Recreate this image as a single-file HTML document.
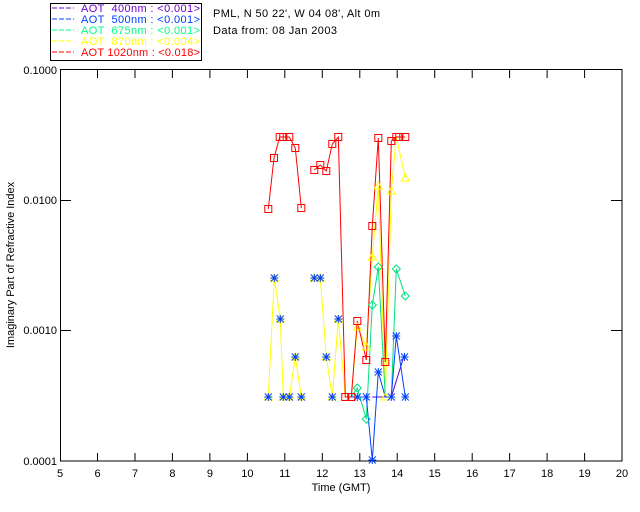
<!DOCTYPE html>
<html><head><style>html,body{margin:0;padding:0;background:#fff}svg{display:block}text{font-family:"Liberation Sans",sans-serif;font-size:11px}</style></head><body>
<svg width="640" height="512" viewBox="0 0 640 512" xmlns="http://www.w3.org/2000/svg">
<defs>
<path id="tri" d="M0 -4L4 3H-4Z" fill="none" stroke="#ffff00"/>
<path id="dia" d="M0 -4L4 0L0 4L-4 0Z" fill="none" stroke="#00e080"/>
<path id="ast" d="M-3.5 -3.5L3.5 3.5M3.5 -3.5L-3.5 3.5M0 -4V4M-4 0H4" stroke="#0040ff" fill="none"/>
</defs>
<rect x="50.5" y="3.5" width="151" height="57" fill="none" stroke="#000"/>
<g font-size="11">
<line x1="52" y1="8" x2="74" y2="8" stroke="#7000d0" stroke-dasharray="5,2"/><text x="81" y="12" fill="#7000d0" textLength="119" xml:space="preserve">AOT  400nm : &lt;0.001&gt;</text>
<line x1="52" y1="19" x2="74" y2="19" stroke="#0040ff" stroke-dasharray="5,2"/><text x="81" y="23" fill="#0040ff" textLength="119" xml:space="preserve">AOT  500nm : &lt;0.001&gt;</text>
<line x1="52" y1="30" x2="74" y2="30" stroke="#00ff80" stroke-dasharray="5,2"/><text x="81" y="34" fill="#00ff80" textLength="119" xml:space="preserve">AOT  675nm : &lt;0.001&gt;</text>
<line x1="52" y1="41" x2="74" y2="41" stroke="#ffff00" stroke-dasharray="5,2"/><text x="81" y="45" fill="#ffff00" textLength="119" xml:space="preserve">AOT  870nm : &lt;0.004&gt;</text>
<line x1="52" y1="52" x2="74" y2="52" stroke="#ff0000" stroke-dasharray="5,2"/><text x="81" y="56" fill="#ff0000" textLength="119" xml:space="preserve">AOT 1020nm : &lt;0.018&gt;</text>
</g>
<text x="213" y="17" textLength="167">PML, N 50 22', W 04 08', Alt 0m</text>
<text x="213" y="34" textLength="124">Data from: 08 Jan 2003</text>
<rect x="60.5" y="69.5" width="561.5" height="391.5" fill="none" stroke="#000"/>
<g stroke="#000">
<path d="M97.5 461v-8M135 461v-8M172.4 461v-8M209.9 461v-8M247.4 461v-8M284.8 461v-8M322.3 461v-8M359.8 461v-8M397.2 461v-8M434.7 461v-8M472.2 461v-8M509.6 461v-8M547.1 461v-8M584.6 461v-8"/>
<path d="M97.5 70v8M135 70v8M172.4 70v8M209.9 70v8M247.4 70v8M284.8 70v8M322.3 70v8M359.8 70v8M397.2 70v8M434.7 70v8M472.2 70v8M509.6 70v8M547.1 70v8M584.6 70v8"/>
<path d="M60 200.5h11M60 330.5h11M622 200.5h-11M622 330.5h-11"/>
</g>
<g text-anchor="end"><text x="57" y="74">0.1000</text><text x="57" y="204">0.0100</text><text x="57" y="334">0.0010</text><text x="57" y="465">0.0001</text></g>
<g text-anchor="middle">
<text x="60" y="477">5</text><text x="97.5" y="477">6</text><text x="135" y="477">7</text><text x="172.4" y="477">8</text><text x="209.9" y="477">9</text><text x="247.4" y="477">10</text><text x="284.8" y="477">11</text><text x="322.3" y="477">12</text><text x="359.8" y="477">13</text><text x="397.2" y="477">14</text><text x="434.7" y="477">15</text><text x="472.2" y="477">16</text><text x="509.6" y="477">17</text><text x="547.1" y="477">18</text><text x="584.6" y="477">19</text><text x="622" y="477">20</text>
<text x="341" y="491">Time (GMT)</text>
<text transform="translate(14,265) rotate(-90)">Imaginary Part of Refractive Index</text>
</g>
<g fill="none" stroke-width="1">
<polyline stroke="#ffff00" points="268.3,397 274.3,278 280.3,319 283.3,397 289.3,397 295.3,357 301.3,397"/>
<polyline stroke="#ffff00" points="314.3,278 320.3,278 326.3,357 332.3,397 338.3,319 345.3,397 351.3,397 357.3,327 366.3,347 372.3,257 378.3,186 385.3,397 391.3,191 396.3,137 405.3,178"/>
<polyline stroke="#00e080" points="345.3,397 351.3,397 357.3,388 366.3,419 372.3,305 378.3,267 385.3,397 391.3,397 396.3,269 405.3,296"/>
<polyline stroke="#6000c0" points="372.3,397 378.3,397 385.3,397 391.3,397 403.7,357"/>
<polyline stroke="#0040ff" points="345.3,397 357.3,397 366.3,397 372.3,460 378.3,372 385.3,397 391.3,397 396.3,336 405.3,397"/>
<polyline stroke="#ff0000" points="268.3,209 274,158 279.7,137 283.3,137 289.3,137 295.3,148 301.3,208"/>
<polyline stroke="#ff0000" points="314.3,170 320.3,165 326.3,171 332.3,144 338.3,137 345.3,397 351.3,397 357.3,321 366.3,360 372.3,226 378.3,138 385.3,362 391.3,141 396.3,137 399.3,137 405.3,137"/>
</g>
<g>
<use href="#tri" x="268.3" y="397"/><use href="#tri" x="274.3" y="278"/><use href="#tri" x="280.3" y="319"/><use href="#tri" x="283.3" y="397"/><use href="#tri" x="289.3" y="397"/><use href="#tri" x="295.3" y="357"/><use href="#tri" x="301.3" y="397"/><use href="#tri" x="314.3" y="278"/><use href="#tri" x="320.3" y="278"/><use href="#tri" x="326.3" y="357"/><use href="#tri" x="332.3" y="397"/><use href="#tri" x="338.3" y="319"/><use href="#tri" x="357.3" y="327"/><use href="#tri" x="366.3" y="347"/><use href="#tri" x="372.3" y="257"/><use href="#tri" x="378.3" y="186"/><use href="#tri" x="385.3" y="397"/><use href="#tri" x="391.3" y="191"/><use href="#tri" x="405.3" y="178"/>
<use href="#dia" x="357.3" y="388"/><use href="#dia" x="366.3" y="419"/><use href="#dia" x="372.3" y="305"/><use href="#dia" x="378.3" y="267"/><use href="#dia" x="396.3" y="269"/><use href="#dia" x="405.3" y="296"/>
<use href="#ast" x="268.3" y="397"/><use href="#ast" x="274.3" y="278"/><use href="#ast" x="280.3" y="319"/><use href="#ast" x="283.3" y="397"/><use href="#ast" x="289.3" y="397"/><use href="#ast" x="295.3" y="357"/><use href="#ast" x="301.3" y="397"/><use href="#ast" x="314.3" y="278"/><use href="#ast" x="320.3" y="278"/><use href="#ast" x="326.3" y="357"/><use href="#ast" x="332.3" y="397"/><use href="#ast" x="338.3" y="319"/><use href="#ast" x="357.3" y="397"/><use href="#ast" x="366.3" y="397"/><use href="#ast" x="372.3" y="460"/><use href="#ast" x="378.3" y="372"/><use href="#ast" x="391.3" y="397"/><use href="#ast" x="396.3" y="336"/><use href="#ast" x="405.3" y="397"/><use href="#ast" x="404.5" y="357"/>
</g>
<g stroke="#ff0000" fill="none">
<path d="M264.8 205.5h7v7h-7zM270.5 154.5h7v7h-7zM276.2 133.5h7v7h-7zM279.8 133.5h7v7h-7zM285.8 133.5h7v7h-7zM291.8 144.5h7v7h-7zM297.8 204.5h7v7h-7zM310.8 166.5h7v7h-7zM316.8 161.5h7v7h-7zM322.8 167.5h7v7h-7zM328.8 140.5h7v7h-7zM334.8 133.5h7v7h-7zM341.8 393.5h7v7h-7zM347.8 393.5h7v7h-7zM353.8 317.5h7v7h-7zM362.8 356.5h7v7h-7zM368.8 222.5h7v7h-7zM374.8 134.5h7v7h-7zM381.8 358.5h7v7h-7zM387.8 137.5h7v7h-7zM392.8 133.5h7v7h-7zM395.8 133.5h7v7h-7zM401.8 133.5h7v7h-7z"/>
</g>
</svg>
</body></html>
